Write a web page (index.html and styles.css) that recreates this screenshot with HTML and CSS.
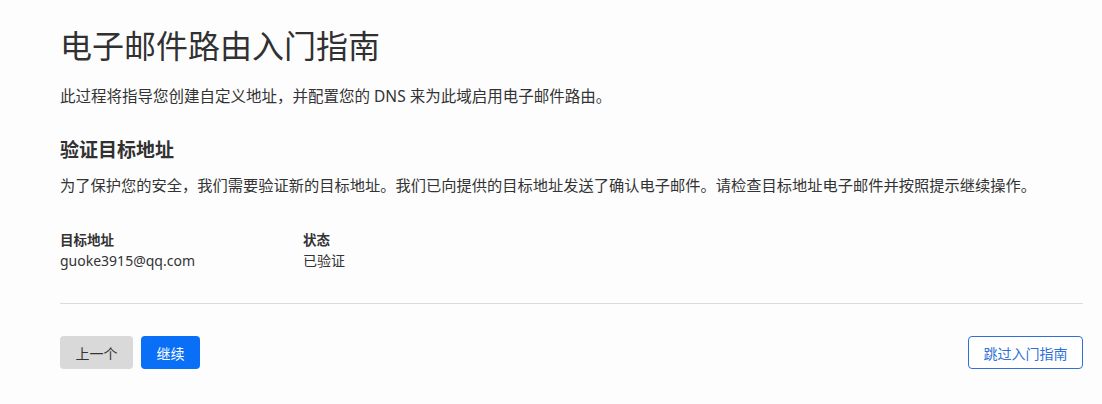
FILE: index.html
```html
<!DOCTYPE html>
<html lang="zh-CN">
<head>
    <meta charset="UTF-8">
    <meta name="viewport" content="width=device-width, initial-scale=1.0">
    <title>电子邮件路由入门指南</title>
    <link rel="stylesheet" href="styles.css">
</head>
<body>
    <div class="page">
        <h1>电子邮件路由入门指南</h1>
        <p class="intro">此过程将指导您创建自定义地址，并配置您的 DNS 来为此域启用电子邮件路由。</p>

        <h2>验证目标地址</h2>
        <p class="desc">为了保护您的安全，我们需要验证新的目标地址。我们已向提供的目标地址发送了确认电子邮件。请检查目标地址电子邮件并按照提示继续操作。</p>

        <div class="details">
            <div class="field">
                <div class="field-label">目标地址</div>
                <div class="field-value">guoke3915@qq.com</div>
            </div>
            <div class="field">
                <div class="field-label">状态</div>
                <div class="field-value">已验证</div>
            </div>
        </div>

        <hr class="divider">

        <div class="actions">
            <div class="actions-left">
                <button class="btn btn-grey">上一个</button>
                <button class="btn btn-blue">继续</button>
            </div>
            <button class="btn btn-outline">跳过入门指南</button>
        </div>
    </div>
</body>
</html>
```

FILE: styles.css
```css
body {
    margin: 0;
    padding: 0;
    background-color: #fdfdfe;
    color: #333;
    font-family: "Noto Sans", "Noto Sans CJK SC", sans-serif;
}
.page {
    padding: 25px 19px 0 60px;
}
h1 {
    margin: 0;
    font-size: 32px;
    line-height: 42px;
    font-weight: 400;
    color: #313131;
}
.intro {
    margin: 17px 0 0;
    font-size: 15.5px;
    line-height: 24px;
}
h2 {
    margin: 28px 0 0;
    font-size: 19px;
    line-height: 28px;
    font-weight: 700;
    color: #313131;
}
.desc {
    margin: 10px 0 0;
    font-size: 15.25px;
    line-height: 22px;
}
.details {
    display: flex;
    margin-top: 34px;
}
.field {
    width: 243px;
}
.field-label {
    font-size: 13.5px;
    line-height: 20px;
    font-weight: 700;
}
.field-value {
    margin-top: 1px;
    font-size: 14px;
    line-height: 20px;
}
.divider {
    margin: 32px 0 0;
    border: none;
    border-top: 1px solid #dcdcdc;
}
.actions {
    display: flex;
    justify-content: space-between;
    margin-top: 32px;
}
.actions-left {
    display: flex;
    gap: 8px;
}
.btn {
    height: 33px;
    padding: 0;
    border-radius: 4px;
    border: 1px solid transparent;
    font-family: inherit;
    font-size: 14px;
    text-align: center;
    white-space: nowrap;
    cursor: pointer;
}
.btn-grey {
    width: 73px;
    background-color: #d9d9d9;
    color: #333;
}
.btn-blue {
    width: 59px;
    background-color: #0a6ff7;
    color: white;
}
.btn-outline {
    width: 115px;
    background-color: white;
    border-color: #2f70d8;
    color: #2f70d8;
}
```
